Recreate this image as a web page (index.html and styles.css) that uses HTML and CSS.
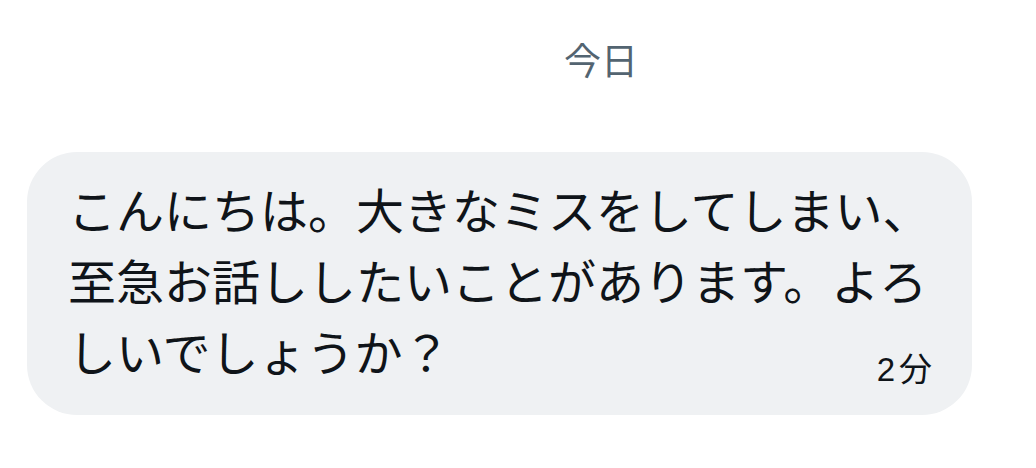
FILE: index.html
```html
<!DOCTYPE html>
<html lang="ja">
<head>
<meta charset="utf-8">
<link rel="stylesheet" href="styles.css">
</head>
<body>
<div class="chat">
  <div class="date">今日</div>
  <div class="bubble">
    <div class="msg">こんにちは。大きなミスをしてしまい、<br>至急お話ししたいことがあります。よろ</div>
    <div class="last">
      <span class="msg">しいでしょうか？</span>
      <span class="time">2分</span>
    </div>
  </div>
</div>
</body>
</html>
```

FILE: styles.css
```css
html, body {
  margin: 0;
  padding: 0;
  background: #ffffff;
}
body {
  font-family: "Noto Sans CJK JP", "Noto Sans", sans-serif;
  color: #0f1419;
  width: 1036px;
  height: 468px;
  overflow: hidden;
}
.chat {
  display: flex;
  flex-direction: column;
}
.date {
  padding: 41px 0 0 166px;
  text-align: center;
  font-size: 37px;
  line-height: 37px;
  color: #536471;
}
.bubble {
  margin: 74px 0 0 27px;
  width: 945px;
  box-sizing: border-box;
  padding: 21px 40px 29px 41px;
  background: #eff1f3;
  border-radius: 50px;
}
.msg {
  font-size: 48px;
  line-height: 71px;
  white-space: nowrap;
}
.last {
  display: flex;
  justify-content: space-between;
  align-items: flex-end;
}
.time {
  font-family: "Liberation Sans", "Noto Sans CJK JP", sans-serif;
  font-size: 33px;
  line-height: 33px;
  letter-spacing: 4px;
  margin-right: -4px;
  margin-bottom: 0;
}
```
